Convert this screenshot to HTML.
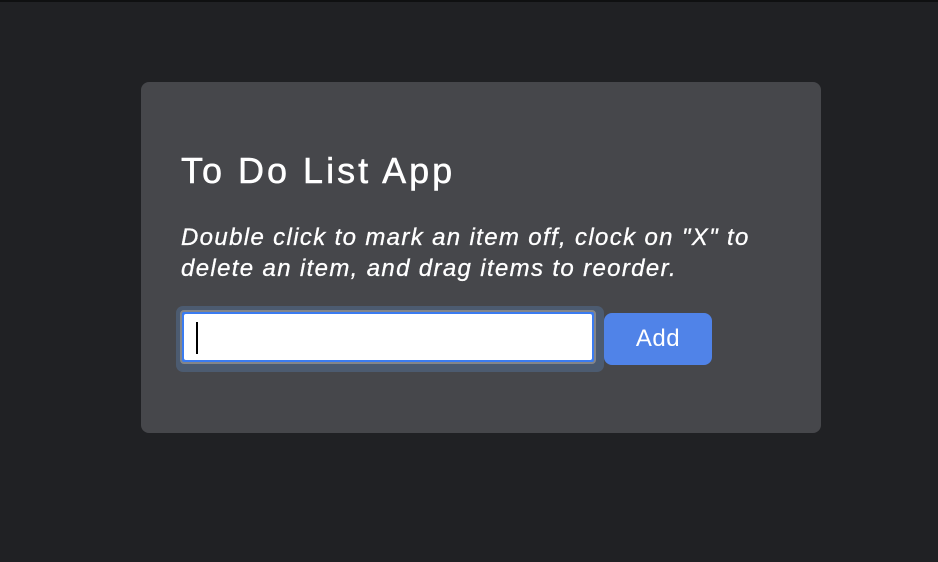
<!DOCTYPE html>
<html><head><style>
html,body{margin:0;padding:0;}
body{width:938px;height:562px;background:#202124;font-family:"Liberation Sans",sans-serif;position:relative;overflow:hidden;}
.bar{position:absolute;left:0;top:0;width:938px;height:2px;background:#0f1011;}
.card{position:absolute;left:141px;top:82px;width:680px;height:351px;background:#46474b;border-radius:8px;}
h1{position:absolute;left:40px;top:66px;margin:0;font-size:36px;font-weight:normal;color:#fff;line-height:46px;letter-spacing:3px;-webkit-text-stroke:0.5px #fff;white-space:nowrap;}
p{position:absolute;left:40px;top:140px;margin:0;font-size:24px;font-style:italic;color:#fff;line-height:31px;width:640px;letter-spacing:1.35px;white-space:nowrap;-webkit-text-stroke:0.3px #fff;}
.halo{position:absolute;left:35px;top:224px;width:428px;height:66px;border-radius:7px;background:#4c5b70;}
.inp{position:absolute;left:39px;top:228px;width:416px;height:54px;border:2px solid #838589;border-radius:4px;box-sizing:border-box;background:#3a7bf0;}
.inp div{position:absolute;left:2px;top:2px;right:2px;bottom:2px;background:#fff;border-radius:2px;}
.caret{position:absolute;left:55px;top:240px;width:2px;height:32px;background:#000;}
.btn{position:absolute;left:463px;top:231px;width:108px;height:52px;background:#5083e8;border-radius:8px;color:#fff;font-size:24px;text-align:center;line-height:52px;letter-spacing:0.5px;}
</style></head><body>
<div class="bar"></div>
<div class="card">
<h1>To Do List App</h1>
<p>Double click to mark an item off, clock on "X" to<br>delete an item, and drag items to reorder.</p>
<div class="halo"></div>
<div class="inp"><div></div></div>
<div class="caret"></div>
<div class="btn">Add</div>
</div>
</body></html>
